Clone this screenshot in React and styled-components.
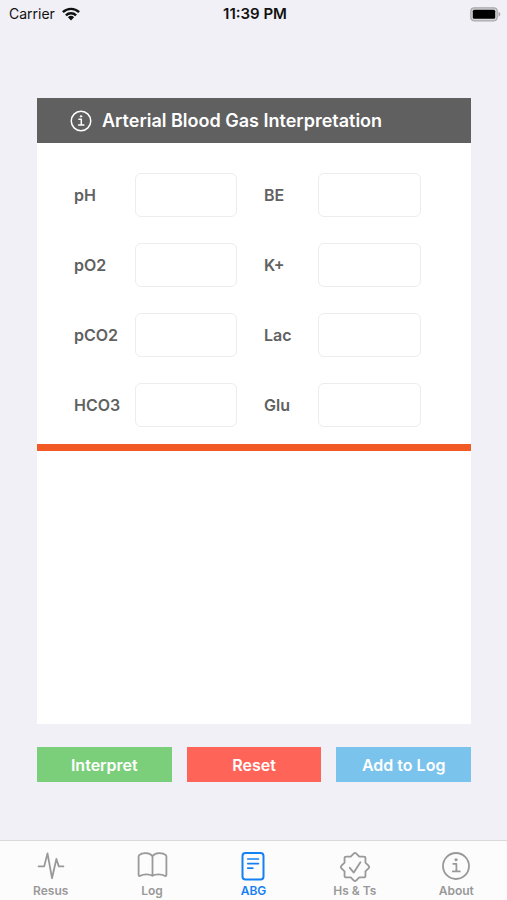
import React from "react";
import styled, { createGlobalStyle } from "styled-components";

const GlobalStyle = createGlobalStyle`
  *, *::before, *::after { box-sizing: border-box; }
  body {
    margin: 0;
    background: #f1f0f6;
    font-family: Inter, "Liberation Sans", sans-serif;
  }
`;

const Screen = styled.div`
  display: flex;
  flex-direction: column;
  min-height: 100vh;
`;

const StatusBar = styled.header`
  display: grid;
  grid-template-columns: 1fr auto 1fr;
  align-items: center;
  height: 28px;
  padding: 0 6px 0 9px;
  color: #111;
  font-size: 14px;
  line-height: 20px;
`;

const Carrier = styled.div`
  display: flex;
  align-items: center;
  gap: 7px;
`;

const Clock = styled.time`
  font-size: 15px;
  font-weight: 600;
`;

const BatteryIcon = styled.svg`
  justify-self: end;
`;

const Main = styled.main`
  flex: 1;
  display: flex;
  flex-direction: column;
  gap: 23px;
  padding: 70px 36px 58px 37px;
`;

const Card = styled.section`
  flex: 1;
  display: flex;
  flex-direction: column;
  background: #fff;
`;

const CardHeader = styled.div`
  display: flex;
  align-items: center;
  gap: 9px;
  height: 45px;
  padding: 0 32px;
  background: #606060;
  color: #fff;
`;

const Title = styled.h1`
  margin: 0;
  font-size: 18px;
  line-height: 24px;
  font-weight: 600;
`;

const Fields = styled.form`
  display: grid;
  grid-template-columns: 163fr 157fr;
  column-gap: 27px;
  padding: 30px 50px 17px 37px;
`;

const FieldColumn = styled.div`
  display: flex;
  flex-direction: column;
  gap: 26px;
`;

const Field = styled.div`
  display: grid;
  grid-template-columns: ${(p) => p.$labelWidth} minmax(0, 1fr);
  align-items: center;
`;

const Label = styled.label`
  color: #616161;
  font-size: 16px;
  line-height: 20px;
  font-weight: 600;
`;

const Input = styled.input`
  width: 100%;
  height: 44px;
  padding: 0 10px;
  border: 1px solid #ededed;
  border-radius: 6px;
  background: #fff;
  color: #333;
  font: inherit;
  font-size: 16px;
`;

const Results = styled.output`
  flex: 1;
  border-top: 7px solid #f15a24;
`;

const Actions = styled.div`
  display: grid;
  grid-template-columns: repeat(3, 1fr);
  column-gap: 15px;
`;

const ActionButton = styled.button`
  height: 35px;
  padding: 0;
  border: 0;
  background: ${(p) => p.$color};
  color: #fff;
  font: inherit;
  font-size: 16px;
  font-weight: 600;
`;

const TabBar = styled.nav`
  display: grid;
  grid-template-columns: repeat(5, 1fr);
  height: 60px;
  border-top: 1px solid #d9d9dc;
  background: #fcfcfd;
`;

const Tab = styled.a`
  display: flex;
  flex-direction: column;
  align-items: center;
  padding-top: 9px;
  gap: 1px;
  color: ${(p) => (p.$active ? "#1580f2" : "#999")};
  font-size: 12px;
  line-height: 16px;
  font-weight: 600;
  text-decoration: none;
`;

const Icon = styled.svg`
  display: block;
  flex: none;
  fill: none;
  stroke: currentColor;
  stroke-width: ${(p) => p.$weight || 1.8};
  stroke-linecap: round;
  stroke-linejoin: round;
`;

function InfoIcon({ size, weight }) {
  return (
    <Icon width={size} height={size} viewBox="0 0 32 32" $weight={weight} aria-hidden="true">
      <circle cx="16" cy="16" r="13" />
      <path d="M13.2 13.8h3.2v7.4M12.8 21.4h7" />
      <circle cx="16" cy="9.8" r="1.1" fill="currentColor" stroke="currentColor" strokeWidth="1" />
    </Icon>
  );
}

function PulseIcon() {
  return (
    <Icon width="32" height="32" viewBox="0 0 32 32" aria-hidden="true">
      <path d="M3.6 16.4h5.6l3.3-13L17 28.2 21.4 9l2.4 7.4h4.6" />
    </Icon>
  );
}

function BookIcon() {
  return (
    <Icon width="32" height="32" viewBox="0 0 32 32" aria-hidden="true">
      <path d="M16.500 6.200v19.600M16.500 6.200C13.800 2.300 6.200 2.300 3.200 5.200c-.4.4-.6.8-.6 1.400v18.200c0 1.200.9 1.600 1.800 1 3-2 9-2 12.100 0 3.100-2 9.100-2 12.100 0 .9.600 1.800.2 1.800-1V6.600c0-.6-.2-1-.6-1.400C26.800 2.300 19.200 2.300 16.500 6.200z" />
    </Icon>
  );
}

function DocumentIcon() {
  return (
    <Icon width="32" height="32" viewBox="0 0 32 32" $weight={2} aria-hidden="true">
      <rect x="5.500" y="3" width="21" height="26.500" rx="3" />
      <path d="M10.800 9h10.600M10.800 13.600h10.600M10.800 18.200h5" strokeWidth="1.700" />
    </Icon>
  );
}

const sealPath = (() => {
  const point = (radius, step) => {
    const angle = ((step * 22.5 - 90) * Math.PI) / 180;
    return [16 + radius * Math.cos(angle), 17 + radius * Math.sin(angle)];
  };
  const mix = (a, b, t) => [a[0] + (b[0] - a[0]) * t, a[1] + (b[1] - a[1]) * t];
  const text = (p) => p.map((n) => n.toFixed(2)).join(" ");
  let d = "";
  for (let i = 0; i < 16; i += 2) {
    const tip = point(14.8, i);
    const before = mix(tip, point(11.3, i - 1), 0.3);
    const valley = point(11.3, i + 1);
    const after = mix(tip, valley, 0.3);
    d += `${i ? "L" : "M"}${text(before)}Q${text(tip)} ${text(after)}L${text(valley)}`;
  }
  return `${d}Z`;
})();

function SealIcon() {
  return (
    <Icon width="32" height="32" viewBox="0 0 32 32" aria-hidden="true">
      <path d={sealPath} />
      <path d="M10.800 17.800l4 4.800 6.600-10.400" />
    </Icon>
  );
}

function WifiIcon() {
  return (
    <svg width="18" height="14" viewBox="0 0 18 14" aria-hidden="true">
      <g fill="none" stroke="#111" strokeWidth="2.400">
        <path d="M.9 5.200a11.600 11.600 0 0 1 16.200 0" />
        <path d="M3.900 8.300a7.300 7.300 0 0 1 10.200 0" />
      </g>
      <path d="M5.900 10.300a4.500 4.500 0 0 1 6.200 0L9 13.500z" fill="#111" />
    </svg>
  );
}

const fieldColumns = [
  { labelWidth: "61px", names: ["pH", "pO2", "pCO2", "HCO3"] },
  { labelWidth: "54px", names: ["BE", "K+", "Lac", "Glu"] },
];

const actions = [
  { name: "Interpret", color: "#7bcf7b" },
  { name: "Reset", color: "#ff6459" },
  { name: "Add to Log", color: "#79c3ec" },
];

const tabs = [
  { name: "Resus", icon: <PulseIcon /> },
  { name: "Log", icon: <BookIcon /> },
  { name: "ABG", icon: <DocumentIcon />, active: true },
  { name: "Hs & Ts", icon: <SealIcon /> },
  { name: "About", icon: <InfoIcon size={32} /> },
];

export default function App() {
  return (
    <Screen>
      <GlobalStyle />
      <StatusBar>
        <Carrier>
          Carrier
          <WifiIcon />
        </Carrier>
        <Clock>11:39 PM</Clock>
        <BatteryIcon width="31" height="15" viewBox="0 0 31 15" role="img" aria-label="Battery full">
          <rect x=".8" y=".8" width="26.400" height="13" rx="3.500" fill="#d5d5d8" stroke="#a8a8ab" strokeWidth="1.200" />
          <rect x="2.800" y="2.800" width="22.400" height="9" rx="1.500" fill="#000" />
          <path d="M28.500 4.800c2.400 1 2.400 4 0 5z" fill="#a8a8ab" />
        </BatteryIcon>
      </StatusBar>
      <Main>
        <Card>
          <CardHeader>
            <InfoIcon size={24} weight={2} />
            <Title>Arterial Blood Gas Interpretation</Title>
          </CardHeader>
          <Fields id="gas-form">
            {fieldColumns.map((column) => (
              <FieldColumn key={column.labelWidth}>
                {column.names.map((name) => (
                  <Field key={name} $labelWidth={column.labelWidth}>
                    <Label htmlFor={`field-${name}`}>{name}</Label>
                    <Input id={`field-${name}`} name={name} inputMode="decimal" />
                  </Field>
                ))}
              </FieldColumn>
            ))}
          </Fields>
          <Results form="gas-form" />
        </Card>
        <Actions>
          {actions.map((action) => (
            <ActionButton key={action.name} type="button" $color={action.color}>
              {action.name}
            </ActionButton>
          ))}
        </Actions>
      </Main>
      <TabBar>
        {tabs.map((tab) => (
          <Tab key={tab.name} href="#" $active={tab.active} aria-current={tab.active ? "page" : undefined}>
            {tab.icon}
            {tab.name}
          </Tab>
        ))}
      </TabBar>
    </Screen>
  );
}
